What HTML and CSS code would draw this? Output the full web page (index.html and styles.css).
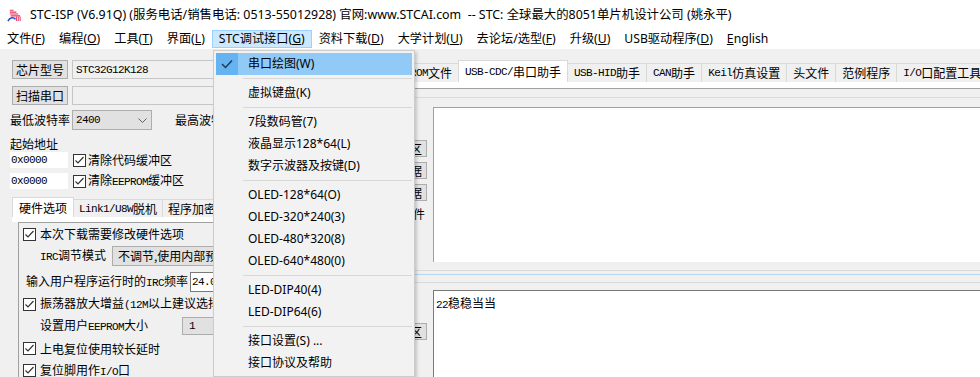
FILE: index.html
```html
<!DOCTYPE html>
<html lang="zh-CN">
<head>
    <meta charset="UTF-8">
    <title>STC-ISP (V6.91Q)</title>
    <link rel="stylesheet" href="styles.css">
</head>
<body>
<div class="window">
    <div class="titlebar">
        <svg class="app-icon" viewBox="0 0 16 16" width="15" height="15">
            <path d="M3 3.5h4M3 5.5h7M3 7.5h9M4 9.5h10" stroke="#e8345c" stroke-width="1.2" fill="none"/>
            <path d="M10 10v5M12 10v5M14 10v5" stroke="#e8345c" stroke-width="1.1"/>
            <path d="M1 15c2-4 6-4.5 8-2" stroke="#2548c9" stroke-width="1.6" fill="none"/>
        </svg>
        <span class="title">STC-ISP (V6.91Q) (服务电话/销售电话: 0513-55012928) 官网:www.STCAI.com  -- STC: 全球最大的8051单片机设计公司 (姚永平)</span>
    </div>

    <div class="menubar">
        <span class="menu-item">文件(<u>F</u>)</span>
        <span class="menu-item">编程(<u>O</u>)</span>
        <span class="menu-item">工具(<u>T</u>)</span>
        <span class="menu-item">界面(<u>L</u>)</span>
        <span class="menu-item open">STC调试接口(<u>G</u>)</span>
        <span class="menu-item">资料下载(<u>D</u>)</span>
        <span class="menu-item">大学计划(<u>U</u>)</span>
        <span class="menu-item">去论坛/选型(<u>F</u>)</span>
        <span class="menu-item">升级(<u>U</u>)</span>
        <span class="menu-item">USB驱动程序(<u>D</u>)</span>
        <span class="menu-item"><u>E</u>nglish</span>
    </div>

    <div class="main">
        <!-- left: chip / port / options -->
        <div class="left">
            <div class="row r-chip">
                <div class="btn">芯片型号</div>
                <div class="field"><span class="m">STC32G12K128</span></div>
            </div>
            <div class="row r-scan">
                <div class="btn">扫描串口</div>
                <div class="field"></div>
            </div>
            <div class="row r-baud">
                <span class="lbl-baud">最低波特率</span>
                <div class="select baud">
                    <span class="m">2400</span>
                    <svg width="9" height="5" viewBox="0 0 9 5"><polyline points="0.5,0.5 4.5,4.5 8.5,0.5" fill="none" stroke="#606060"/></svg>
                </div>
                <span class="lbl-max">最高波特率</span>
            </div>
            <div class="addr-title">起始地址</div>
            <div class="row r-addr">
                <div class="input"><span class="m">0x0000</span></div>
                <span class="cb"><svg viewBox="0 0 11 11" width="11" height="11"><polyline points="1.5,5.5 4,8 9.5,2" fill="none" stroke="#333" stroke-width="1.2"/></svg></span>
                <span>清除代码缓冲区</span>
            </div>
            <div class="row r-addr r-addr2">
                <div class="input"><span class="m">0x0000</span></div>
                <span class="cb"><svg viewBox="0 0 11 11" width="11" height="11"><polyline points="1.5,5.5 4,8 9.5,2" fill="none" stroke="#333" stroke-width="1.2"/></svg></span>
                <span>清除<span class="m">EEPROM</span>缓冲区</span>
            </div>

            <div class="tabs ltabs">
                <span class="tab active">硬件选项</span>
                <span class="tab"><span class="m">Link1/U8W</span>脱机</span>
                <span class="tab">程序加密后传输</span>
            </div>
            <div class="tabpage">
                <div class="panel">
                    <div class="prow">
                        <span class="cb"><svg viewBox="0 0 11 11" width="11" height="11"><polyline points="1.5,5.5 4,8 9.5,2" fill="none" stroke="#333" stroke-width="1.2"/></svg></span>
                        <span class="cb-text">本次下载需要修改硬件选项</span>
                    </div>
                    <div class="prow indent">
                        <span><span class="m">IRC</span>调节模式</span>
                        <div class="select irc">不调节,使用内部预置频率</div>
                    </div>
                    <div class="prow freq">
                        <span>输入用户程序运行时的<span class="m">IRC</span>频率</span>
                        <div class="input freq-in"><span class="m">24.000</span></div>
                    </div>
                    <div class="prow">
                        <span class="cb"><svg viewBox="0 0 11 11" width="11" height="11"><polyline points="1.5,5.5 4,8 9.5,2" fill="none" stroke="#333" stroke-width="1.2"/></svg></span>
                        <span class="cb-text">振荡器放大增益<span class="m">(12M</span>以上建议选择<span class="m">)</span></span>
                    </div>
                    <div class="prow indent">
                        <span>设置用户<span class="m">EEPROM</span>大小</span>
                        <div class="select eeprom"><span class="m">1    K</span></div>
                    </div>
                    <div class="prow tall">
                        <span class="cb"><svg viewBox="0 0 11 11" width="11" height="11"><polyline points="1.5,5.5 4,8 9.5,2" fill="none" stroke="#333" stroke-width="1.2"/></svg></span>
                        <span class="cb-text">上电复位使用较长延时</span>
                    </div>
                    <div class="prow short">
                        <span class="cb"><svg viewBox="0 0 11 11" width="11" height="11"><polyline points="1.5,5.5 4,8 9.5,2" fill="none" stroke="#333" stroke-width="1.2"/></svg></span>
                        <span class="cb-text">复位脚用作<span class="m">I/O</span>口</span>
                    </div>
                </div>
            </div>
        </div>

        <!-- right: serial assistant -->
        <div class="right">
            <div class="tabs rtabs">
                <span class="tab"><span class="m">EEPROM</span>文件</span>
                <span class="tab active"><span class="m">USB-CDC/</span>串口助手</span>
                <span class="tab"><span class="m">USB-HID</span>助手</span>
                <span class="tab"><span class="m">CAN</span>助手</span>
                <span class="tab"><span class="m">Keil</span>仿真设置</span>
                <span class="tab">头文件</span>
                <span class="tab">范例程序</span>
                <span class="tab"><span class="m">I/O</span>口配置工具</span>
            </div>
            <div class="page-top"></div>
            <div class="page-line"></div>

            <div class="upper">
                <div class="side">
                    <div class="side-btn first">清空接收区</div>
                    <div class="side-btn">接收数据</div>
                    <div class="side-btn">发送数据</div>
                    <div class="side-text">发送文件</div>
                </div>
                <div class="recv"></div>
            </div>

            <div class="split">
                <div class="split-line"></div>
                <div class="split-line blue"></div>
                <div class="split-line last"></div>
            </div>

            <div class="lower">
                <div class="side">
                    <div class="side-btn first">清空发送区</div>
                </div>
                <div class="send">
                    <span class="m">22</span>稳稳当当
                </div>
            </div>
        </div>
    </div>

    <!-- open menu: STC调试接口 -->
    <div class="dropdown">
        <div class="dd-item hl">
            <span class="dd-check"><svg width="12" height="10" viewBox="0 0 12 10"><polyline points="1,5 4.5,8.5 11,1.5" fill="none" stroke="#1f3a56" stroke-width="1.5"/></svg></span>
            串口绘图(W)
        </div>
        <div class="dd-sep"></div>
        <div class="dd-item">虚拟键盘(K)</div>
        <div class="dd-sep"></div>
        <div class="dd-item">7段数码管(7)</div>
        <div class="dd-item">液晶显示128*64(L)</div>
        <div class="dd-item">数字示波器及按键(D)</div>
        <div class="dd-sep"></div>
        <div class="dd-item">OLED-128*64(O)</div>
        <div class="dd-item">OLED-320*240(3)</div>
        <div class="dd-item">OLED-480*320(8)</div>
        <div class="dd-item">OLED-640*480(0)</div>
        <div class="dd-sep"></div>
        <div class="dd-item">LED-DIP40(4)</div>
        <div class="dd-item">LED-DIP64(6)</div>
        <div class="dd-sep"></div>
        <div class="dd-item">接口设置(S) ...</div>
        <div class="dd-item">接口协议及帮助</div>
    </div>
</div>
</body>
</html>
```

FILE: styles.css
```css
* {
    margin: 0;
    padding: 0;
    box-sizing: border-box;
}

body {
    width: 980px;
    height: 377px;
    overflow: hidden;
    background: #f0f0f0;
    font-family: "Noto Sans", "Noto Sans CJK SC", sans-serif;
    font-size: 12px;
    color: #000;
}

.window {
    position: relative;
    height: 377px;
    overflow: hidden;
}

/* title + menu */
.titlebar {
    height: 29px;
    background: #fff;
    display: flex;
    align-items: center;
    padding-left: 7px;
}

.app-icon {
    margin-right: 8px;
    flex: none;
}

.title {
    white-space: pre;
    font-size: 12.4px;
    line-height: 16px;
}

.menubar {
    height: 20px;
    background: #fff;
    display: flex;
    font-size: 12.2px;
}

.menu-item {
    display: flex;
    align-items: center;
    padding: 0 6px;
    margin: 1px 0;
    border: 1px solid transparent;
    white-space: nowrap;
    line-height: 16px;
}

.menu-item.open {
    background: #cce8ff;
    border-color: #99d1ff;
}

/* dialog area */
.main {
    display: flex;
    height: 328px;
    font-family: "Noto Sans CJK SC", sans-serif;
    line-height: 14px;
}

.m {
    font-family: "Liberation Mono", monospace;
    font-size: 11px;
    letter-spacing: -0.6px;
    white-space: pre;
}

.left {
    width: 405px;
    flex: none;
    padding-left: 10px;
    overflow: hidden;
}

.row {
    display: flex;
    align-items: center;
}

.btn {
    width: 56px;
    height: 19px;
    margin-left: 2px;
    background: #e1e1e1;
    border: 1px solid #adadad;
    display: flex;
    align-items: center;
    justify-content: center;
    flex: none;
}

.field {
    width: 330px;
    height: 19px;
    margin-left: 4px;
    padding-left: 3px;
    background: #f0f0f0;
    border: 1px solid #c6c6c6;
    display: flex;
    align-items: center;
    flex: none;
}

.r-chip {
    margin-top: 11px;
    height: 19px;
}

.r-scan {
    margin-top: 7px;
    height: 19px;
}

.r-baud {
    margin-top: 5px;
    height: 20px;
}

.lbl-baud {
    width: 62px;
    flex: none;
}

.select {
    height: 20px;
    background: #e1e1e1;
    border: 1px solid #adadad;
    display: flex;
    align-items: center;
    padding-left: 3px;
    white-space: nowrap;
    flex: none;
}

.baud {
    width: 80px;
    justify-content: space-between;
    padding-right: 4px;
}

.lbl-max {
    margin-left: 23px;
}

.addr-title {
    margin-top: 6px;
    height: 16px;
    line-height: 16px;
}

.r-addr {
    height: 16px;
}

.r-addr2 {
    margin-top: 5px;
}

.input {
    width: 58px;
    height: 16px;
    background: #fff;
    padding-left: 1px;
    display: flex;
    align-items: center;
    flex: none;
}

.cb {
    width: 13px;
    height: 13px;
    margin-left: 5px;
    margin-right: 2px;
    background: #fff;
    border: 1px solid #333;
    display: flex;
    align-items: center;
    justify-content: center;
    flex: none;
}

/* tab strips */
.tabs {
    display: flex;
    align-items: flex-end;
    white-space: nowrap;
}

.tab {
    height: 18px;
    padding: 0 5px;
    margin-right: -1px;
    background: #f0f0f0;
    border: 1px solid #d9d9d9;
    border-bottom: none;
    display: flex;
    align-items: center;
    flex: none;
}

.tab.active {
    background: #fff;
    position: relative;
    z-index: 1;
}

.ltabs {
    margin-top: 8px;
    margin-left: 2px;
    height: 20px;
}

.ltabs .tab.active {
    height: 20px;
    padding: 0 6px;
}

.tabpage {
    margin-left: 2px;
    border-top: 5px solid #fff;
}

.panel {
    margin-left: 6px;
    padding-left: 4px;
    height: 200px;
    border-top: 1px solid #a0a0a0;
    border-left: 1px solid #a0a0a0;
}

.prow {
    display: flex;
    align-items: center;
    height: 22px;
    white-space: nowrap;
}

.prow .cb {
    margin-left: 0;
}

.cb-text {
    margin-left: 2px;
}

.indent {
    padding-left: 17px;
}

.irc {
    width: 300px;
    margin-left: 6px;
    padding-left: 5px;
}

.freq {
    margin-top: 4px;
    padding-left: 3px;
}

.freq-in {
    width: 60px;
    height: 20px;
    margin-left: 2px;
    border: 1px solid #7a7a7a;
}

.eeprom {
    width: 200px;
    height: 18px;
    margin-left: 34px;
    padding-left: 6px;
}

.prow.tall {
    height: 23px;
}

.prow.short {
    height: 21px;
}

/* right side */
.right {
    flex: 1;
    overflow: hidden;
}

.rtabs {
    margin-top: 11px;
    margin-left: -20px;
    height: 22px;
}

.rtabs .tab {
    height: 19px;
    padding: 0 6px;
}

.rtabs .tab.active {
    height: 22px;
}

.page-top {
    height: 7px;
    background: #fff;
    border-bottom: 1px solid #a0a0a0;
}

.page-line {
    margin-top: 8px;
    border-top: 1px solid #dadada;
}

.upper {
    display: flex;
    margin-top: 9px;
    height: 155px;
}

.side {
    width: 22px;
    flex: none;
    display: flex;
    flex-direction: column;
    align-items: flex-end;
    overflow: hidden;
}

.side-btn {
    width: 90px;
    height: 17px;
    margin-top: 5px;
    padding-right: 4px;
    background: #e1e1e1;
    border: 1px solid #adadad;
    display: flex;
    align-items: center;
    justify-content: flex-end;
    white-space: nowrap;
    flex: none;
}

.side-btn.first {
    margin-top: 33px;
}

.side-text {
    margin-top: 6px;
    margin-right: 2px;
    white-space: nowrap;
}

.recv {
    flex: 1;
    margin-left: 6px;
    background: #fff;
    border-top: 1px solid #a0a0a0;
    border-left: 1px solid #a0a0a0;
}

.split {
    height: 28px;
    padding-top: 8px;
}

.split-line {
    height: 1px;
    background: #d9d9d9;
}

.split-line.blue {
    margin-top: 3px;
    background: #b3d7f3;
}

.split-line.last {
    margin-top: 7px;
}

.lower {
    display: flex;
    height: 100px;
}

.send {
    flex: 1;
    margin-left: 6px;
    padding: 5px 2px;
    background: #fff;
    border-top: 1px solid #7a7a7a;
    border-left: 1px solid #7a7a7a;
    line-height: 14px;
}

/* dropdown menu */
.dropdown {
    position: absolute;
    left: 213px;
    top: 50px;
    width: 202px;
    padding: 2px;
    background: #f2f2f2;
    border: 1px solid #cccccc;
    box-shadow: 2px 2px 3px rgba(0, 0, 0, 0.18);
    z-index: 10;
}

.dd-item {
    position: relative;
    height: 22px;
    padding-left: 32px;
    display: flex;
    align-items: center;
    white-space: nowrap;
    line-height: 16px;
}

.dd-item.hl {
    background: #91c9f7;
}

.dd-check {
    position: absolute;
    left: 0;
    top: 0;
    width: 22px;
    height: 22px;
    background: #66b3f2;
    display: flex;
    align-items: center;
    justify-content: center;
}

.dd-sep {
    height: 1px;
    margin: 3px 0 3px 27px;
    background: #d7d7d7;
}
```
